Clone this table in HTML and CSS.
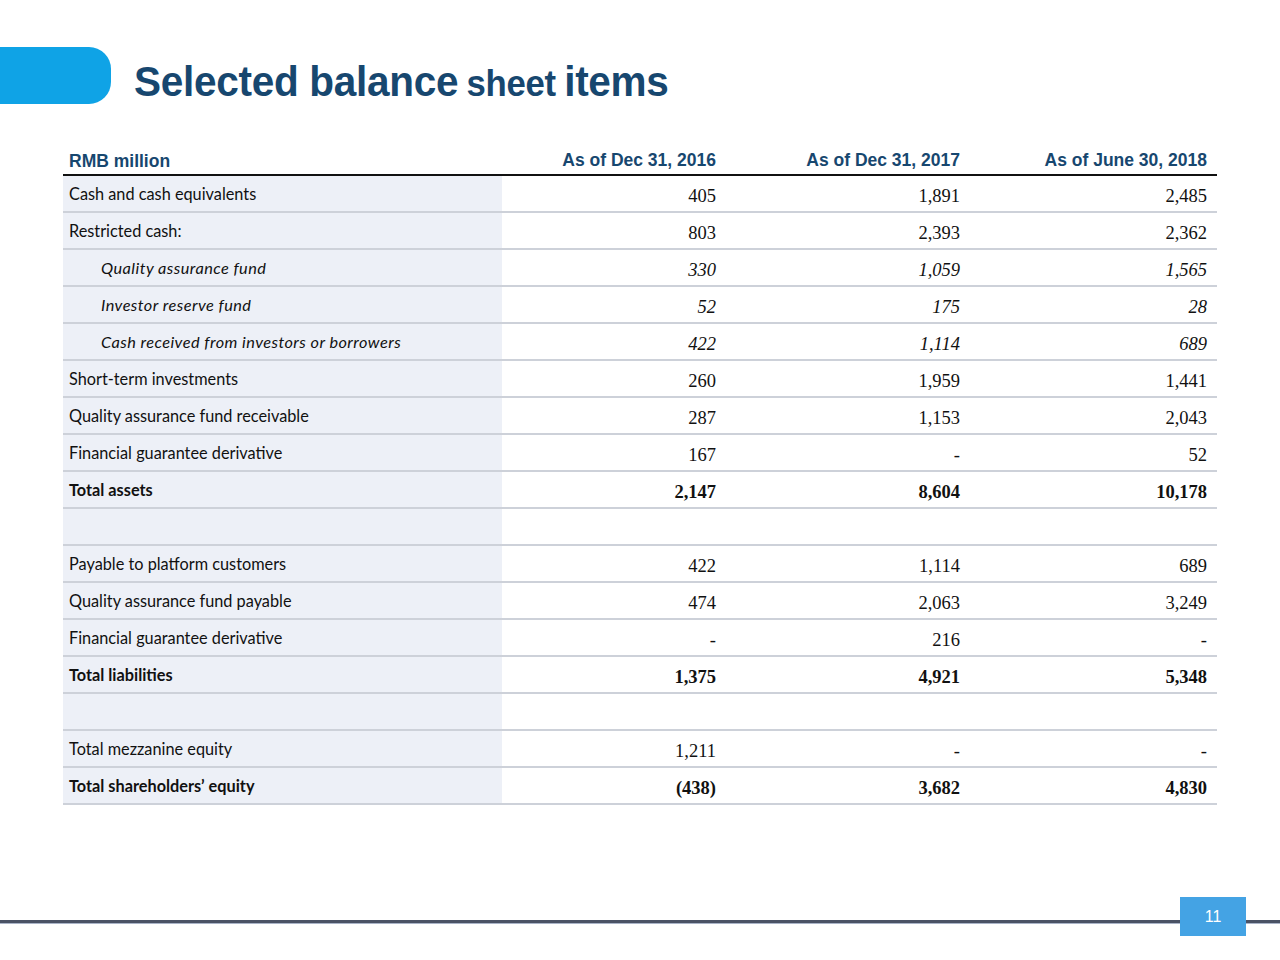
FILE: index.html
```html
<!DOCTYPE html>
<html>
<head>
<meta charset="utf-8">
<link rel="stylesheet" href="styles.css">
</head>
<body>
<div class="slide">
  <header class="top">
    <div class="tab"></div>
    <h1 class="title"><span class="big">Selected balance</span> <span class="small">sheet</span> <span class="big">items</span></h1>
  </header>
  <div class="table">
    <div class="row head">
      <div class="lbl">RMB million</div>
      <div class="num">As of Dec 31, 2016</div>
      <div class="num">As of Dec 31, 2017</div>
      <div class="num">As of June 30, 2018</div>
    </div>
    <div class="row"><div class="lbl">Cash and cash equivalents</div><div class="num">405</div><div class="num">1,891</div><div class="num">2,485</div></div>
    <div class="row"><div class="lbl">Restricted cash:</div><div class="num">803</div><div class="num">2,393</div><div class="num">2,362</div></div>
    <div class="row it"><div class="lbl">Quality assurance fund</div><div class="num">330</div><div class="num">1,059</div><div class="num">1,565</div></div>
    <div class="row it"><div class="lbl">Investor reserve fund</div><div class="num">52</div><div class="num">175</div><div class="num">28</div></div>
    <div class="row it"><div class="lbl">Cash received from investors or borrowers</div><div class="num">422</div><div class="num">1,114</div><div class="num">689</div></div>
    <div class="row"><div class="lbl">Short-term investments</div><div class="num">260</div><div class="num">1,959</div><div class="num">1,441</div></div>
    <div class="row"><div class="lbl">Quality assurance fund receivable</div><div class="num">287</div><div class="num">1,153</div><div class="num">2,043</div></div>
    <div class="row"><div class="lbl">Financial guarantee derivative</div><div class="num">167</div><div class="num">-</div><div class="num">52</div></div>
    <div class="row bold"><div class="lbl">Total assets</div><div class="num">2,147</div><div class="num">8,604</div><div class="num">10,178</div></div>
    <div class="row"><div class="lbl"></div><div class="num"></div><div class="num"></div><div class="num"></div></div>
    <div class="row"><div class="lbl">Payable to platform customers</div><div class="num">422</div><div class="num">1,114</div><div class="num">689</div></div>
    <div class="row"><div class="lbl">Quality assurance fund payable</div><div class="num">474</div><div class="num">2,063</div><div class="num">3,249</div></div>
    <div class="row"><div class="lbl">Financial guarantee derivative</div><div class="num">-</div><div class="num">216</div><div class="num">-</div></div>
    <div class="row bold"><div class="lbl">Total liabilities</div><div class="num">1,375</div><div class="num">4,921</div><div class="num">5,348</div></div>
    <div class="row"><div class="lbl"></div><div class="num"></div><div class="num"></div><div class="num"></div></div>
    <div class="row"><div class="lbl">Total mezzanine equity</div><div class="num">1,211</div><div class="num">-</div><div class="num">-</div></div>
    <div class="row bold"><div class="lbl">Total shareholders’ equity</div><div class="num">(438)</div><div class="num">3,682</div><div class="num">4,830</div></div>
  </div>
  <footer class="foot">
    <div class="line"></div>
    <div class="page">11</div>
  </footer>
</div>
</body>
</html>
```

FILE: styles.css
```css
html, body {
  margin: 0;
  padding: 0;
  background: #ffffff;
}
.slide {
  width: 1280px;
  height: 960px;
  position: relative;
  overflow: hidden;
}
.top {
  display: flex;
  align-items: center;
  height: 57px;
  margin-top: 47px;
}
.tab {
  width: 111px;
  height: 57px;
  background: #0fa3e6;
  border-radius: 0 22px 22px 0;
  flex: none;
}
.title {
  margin: 12px 0 0 23px;
  font-family: "Liberation Sans", Arial, sans-serif;
  font-weight: bold;
  color: #17476f;
  white-space: nowrap;
  transform: scaleX(0.965);
  transform-origin: left center;
  line-height: 1;
  letter-spacing: -0.3px;
}
.title .big { font-size: 42px; }
.title .small { font-size: 36px; }
.table {
  margin: 36px 0 0 63px;
  width: 1154px;
}
.row {
  display: grid;
  grid-template-columns: 439px 224px 244px 247px;
  height: 35px;
  border-bottom: 2px solid #cdd1d9;
}
.row > div {
  display: flex;
  align-items: center;
}
.lbl {
  background: #edf0f7;
  padding-left: 6px;
  padding-bottom: 1px;
  font-family: Lato, "Open Sans", sans-serif;
  font-size: 16.3px;
  color: #111;
}
.num {
  justify-content: flex-end;
  padding-right: 10px;
  padding-top: 5px;
  font-family: "Liberation Serif", "Times New Roman", serif;
  font-size: 18.5px;
  color: #111;
}
.it .lbl { font-style: italic; padding-left: 38px; letter-spacing: 0.45px; }
.it .num { font-style: italic; }
.bold .lbl, .bold .num { font-weight: bold; }
.row.head {
  height: 34px;
  border-bottom: 2px solid #111;
}
.head > div {
  background: transparent;
  font-family: "Liberation Sans", Arial, sans-serif;
  font-weight: bold;
  font-size: 17.5px;
  color: #17476f;
  align-items: flex-end;
  padding-bottom: 3px;
  padding-top: 0;
}
.head .lbl { padding-bottom: 2px; }
.foot {
  position: absolute;
  left: 0;
  top: 897px;
  width: 1280px;
  height: 39px;
}
.line {
  position: absolute;
  left: 0;
  right: 0;
  top: 23px;
  height: 3px;
  background: #4a5265;
  border-bottom: 1px solid #aab4c8;
}
.page {
  position: absolute;
  left: 1180px;
  top: 0;
  width: 66px;
  height: 39px;
  background: #44a3e4;
  color: #ffffff;
  font-family: "Liberation Sans", Arial, sans-serif;
  font-size: 16px;
  display: flex;
  align-items: center;
  justify-content: center;
}
```
